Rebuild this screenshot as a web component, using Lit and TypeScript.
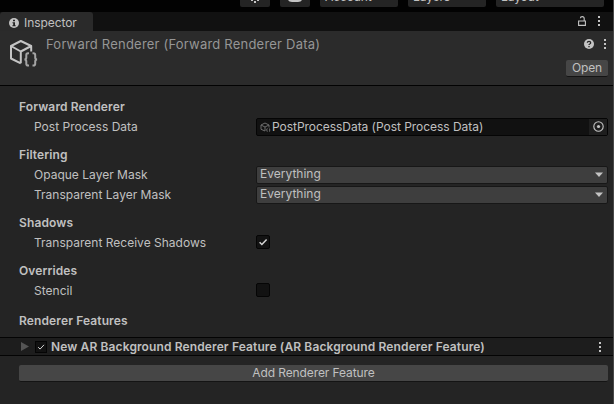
import { LitElement, html, css, svg } from "lit";
import { customElement } from "lit/decorators.js";

const kebab = svg`<rect x="0" y="0" width="2" height="2"/><rect x="0" y="4" width="2" height="2"/><rect x="0" y="8" width="2" height="2"/>`;

@customElement("app-root")
export class AppRoot extends LitElement {
  static styles = css`
    :host {
      display: block;
      width: 614px;
      height: 404px;
      overflow: hidden;
      box-sizing: border-box;
      border-right: 1px solid #484848;
      background: #242424;
      color: #c0c0c0;
      font: 12px/20px Inter, "Liberation Sans", sans-serif;
      letter-spacing: 0.01px;
      white-space: nowrap;
    }
    * { box-sizing: border-box; }
    svg { display: block; flex: none; fill: #c4c4c4; }
    .toolbar { height: 12px; background: #020202; display: flex; padding-left: 240px; overflow: hidden; }
    .tool { height: 7px; background: #242424; border-radius: 0 0 2px 2px; overflow: hidden; flex: none; display: flex; justify-content: center; }
    .tool span { display: block; margin-top: -12px; line-height: 18px; height: 18px; letter-spacing: -0.1px; }
    .gear { width: 30px; margin-right: 10px; }
    .cloud { width: 30px; margin-right: 10px; }
    .drop { justify-content: flex-start; padding-left: 5px; width: 78px; margin-right: 10px; }
    .layout { width: 108px; margin: 0; }
    .tabs { height: 19px; background: #111; display: flex; }
    .tab { width: 93px; height: 19px; background: #2a2a2a; border-radius: 3px 3px 0 0; display: flex; align-items: center; gap: 5px; padding: 3px 0 0 9px; letter-spacing: -0.06px; }
    .tabtools { margin-left: auto; display: flex; gap: 12px; padding: 4px 13px 0 0; }
    .header { height: 55px; background: #2b2b2b; border-bottom: 1px solid #020202; display: flex; padding: 0 5px 0 9px; }
    .asset { margin-top: 8px; }
    .title { margin: 3px 0 0 7px; color: #969696; font-size: 13px; letter-spacing: 0.21px; }
    .actions { margin-left: auto; display: flex; flex-direction: column; align-items: flex-end; }
    .help { display: flex; gap: 10px; padding: 8px 2px 0 0; height: 29px; }
    .button { background: #464646; border-radius: 2px; border-bottom: 1px solid #141414; text-align: center; }
    .open { width: 42px; height: 17px; line-height: 16px; letter-spacing: -0.2px; }
    .body { padding-top: 11px; }
    .group { margin-bottom: 8px; }
    .heading { font-weight: 600; padding-left: 19px; height: 20px; letter-spacing: 0.12px; }
    .row { display: flex; height: 20px; padding-left: 34px; align-items: center; }
    .label { width: 222px; flex: none; }
    .object { width: 352px; height: 18px; background: #111; border: 1px solid #050505; border-radius: 2px; display: flex; align-items: center; padding-left: 3px; gap: 1px; }
    .object span { line-height: 16px; letter-spacing: -0.04px; }
    .picker { margin-left: auto; width: 18px; height: 16px; background: #1e1e1e; display: flex; align-items: center; justify-content: center; padding: 0 0 1px 1px; }
    .select { width: 352px; height: 18px; background: #3e3e3e; border: 1px solid #171717; border-radius: 2px; display: flex; align-items: center; justify-content: space-between; padding: 0 4px 2px 3px; line-height: 14px; }
    .check { width: 14px; height: 14px; background: #121212; border: 1px solid #050505; border-radius: 2px; margin-top: -2px; }
    .features { margin-top: 10px; }
    .feature { margin-top: 6px; height: 19px; background: #1d1d1d; border: solid #040404; border-width: 1px 0; display: flex; align-items: center; padding: 0 12px 0 21px; font-weight: 600; letter-spacing: 0.12px; }
    .feature .check { width: 12px; height: 12px; margin: 0 4px 0 6px; border-radius: 0; }
    .feature .menu { margin-left: auto; }
    .add { margin: 9px 5px 0 19px; height: 17px; line-height: 16px; letter-spacing: -0.1px; }
  `;

  private dots() {
    return html`<svg class="menu" width="2" height="10" viewBox="0 0 2 10">${kebab}</svg>`;
  }

  private mark(width = 1.5) {
    return html`<svg width="100%" height="100%" viewBox="0 0 12 12"><path d="M2.6 6.2 4.9 8.5 9.6 3.4" fill="none" stroke="#d4d4d4" stroke-width=${width}/></svg>`;
  }

  private mask(label: string) {
    return html`<div class="row"><span class="label">${label}</span>
      <div class="select"><span>Everything</span><svg width="8" height="5" viewBox="0 0 8 5"><path d="M0 .500h8L4 5z"/></svg></div></div>`;
  }

  render() {
    return html`
      <div class="toolbar">
        <div class="tool gear"><svg width="14" height="4" viewBox="0 0 14 4"><path d="M3 0h2v1H3zM9 0h2v1H9zM6 1h2v2H6z"/></svg></div>
        <div class="tool cloud"><svg width="16" height="3" viewBox="0 0 16 3"><path d="M1 0h14q-1 2-4 2H5Q2 2 1 0z"/></svg></div>
        <div class="tool drop"><span>Account</span></div>
        <div class="tool drop"><span>Layers</span></div>
        <div class="tool drop layout"><span>Layout</span></div>
      </div>
      <div class="tabs">
        <div class="tab">
          <svg width="10" height="10" viewBox="0 0 10 10"><circle cx="5" cy="5" r="5"/><path d="M4 1.7h2v1.6H4zM3.5 4.2H6v3h.7v1H3.4v-1h.8v-2h-.7z" fill="#242424"/></svg>
          <span>Inspector</span>
        </div>
        <div class="tabtools">
          <svg width="8" height="10" viewBox="0 0 8 10"><path d="M.6 5h6.8v4.4H.6zM6.2 5V2.4Q6.2.6 4.3.6T2.4 2.2" fill="none" stroke="#c4c4c4" stroke-width="1.1"/></svg>
          ${this.dots()}
        </div>
      </div>
      <div class="header">
        <svg class="asset" width="30" height="30" viewBox="0 0 30 30">
          <path d="M11.800 24.300 2 19.500V7L11.800 2l10.400 5v5.500M2 7l9.800 5.500L22.200 7M11.800 12.500v11.800" fill="none" stroke="#c4c4c4" stroke-width="2" stroke-linejoin="round"/>
          <path d="M20 14.300h-1q-1.700 0-1.700 1.700v2.600q0 1.700-1.800 1.900 1.800.2 1.800 1.900v2.400q0 1.800 1.700 1.800h1M23.500 14.300h1q1.700 0 1.700 1.700v2.600q0 1.700 1.800 1.900-1.800.2-1.800 1.900v2.400q0 1.800-1.700 1.800h-1" fill="none" stroke="#a4a4a4" stroke-width="2"/>
        </svg>
        <span class="title">Forward Renderer (Forward Renderer Data)</span>
        <div class="actions">
          <div class="help">
            <svg width="10" height="10" viewBox="0 0 10 10"><circle cx="5" cy="5" r="5"/><path d="M3.300 3.800Q3.400 2.300 5 2.300T6.700 3.700Q6.700 4.500 5.700 5 5 5.300 5 6.100M5 7v1.300" fill="none" stroke="#242424" stroke-width="1.300"/></svg>
            ${this.dots()}
          </div>
          <div class="button open">Open</div>
        </div>
      </div>
      <div class="body">
        <div class="group">
          <div class="heading">Forward Renderer</div>
          <div class="row"><span class="label">Post Process Data</span>
            <div class="object">
              <svg width="11" height="11" viewBox="0 0 11 11"><path d="M5 9 1 7.300V3L5 1l4 2v2.500M1 3l4 2 4-2M5 5v4M7.500 6.500Q6.500 6.500 6.800 8 7 9.500 7.500 9.800M9 6.500q1 0 .7 1.500Q10 9.500 9 9.800" fill="none" stroke="#6c6c6c"/></svg>
              <span>PostProcessData (Post Process Data)</span>
              <div class="picker"><svg width="11" height="11" viewBox="0 0 11 11"><circle cx="5.500" cy="5.500" r="4.700" fill="none" stroke="#c4c4c4" stroke-width="1.100"/><circle cx="5.500" cy="5.500" r="1.600"/></svg></div>
            </div></div>
        </div>
        <div class="group">
          <div class="heading">Filtering</div>
          ${this.mask("Opaque Layer Mask")}
          ${this.mask("Transparent Layer Mask")}
        </div>
        <div class="group">
          <div class="heading">Shadows</div>
          <div class="row"><span class="label">Transparent Receive Shadows</span><div class="check">${this.mark()}</div></div>
        </div>
        <div class="group">
          <div class="heading">Overrides</div>
          <div class="row"><span class="label">Stencil</span><div class="check"></div></div>
        </div>
        <div class="heading features">Renderer Features</div>
        <div class="feature">
          <svg width="8" height="9" viewBox="0 0 8 9"><path d="M0 0 8 4.500 0 9z" fill="#555"/></svg>
          <div class="check">${this.mark(1.2)}</div>
          <span>New AR Background Renderer Feature (AR Background Renderer Feature)</span>
          ${this.dots()}
        </div>
        <div class="button add">Add Renderer Feature</div>
      </div>`;
  }
}
